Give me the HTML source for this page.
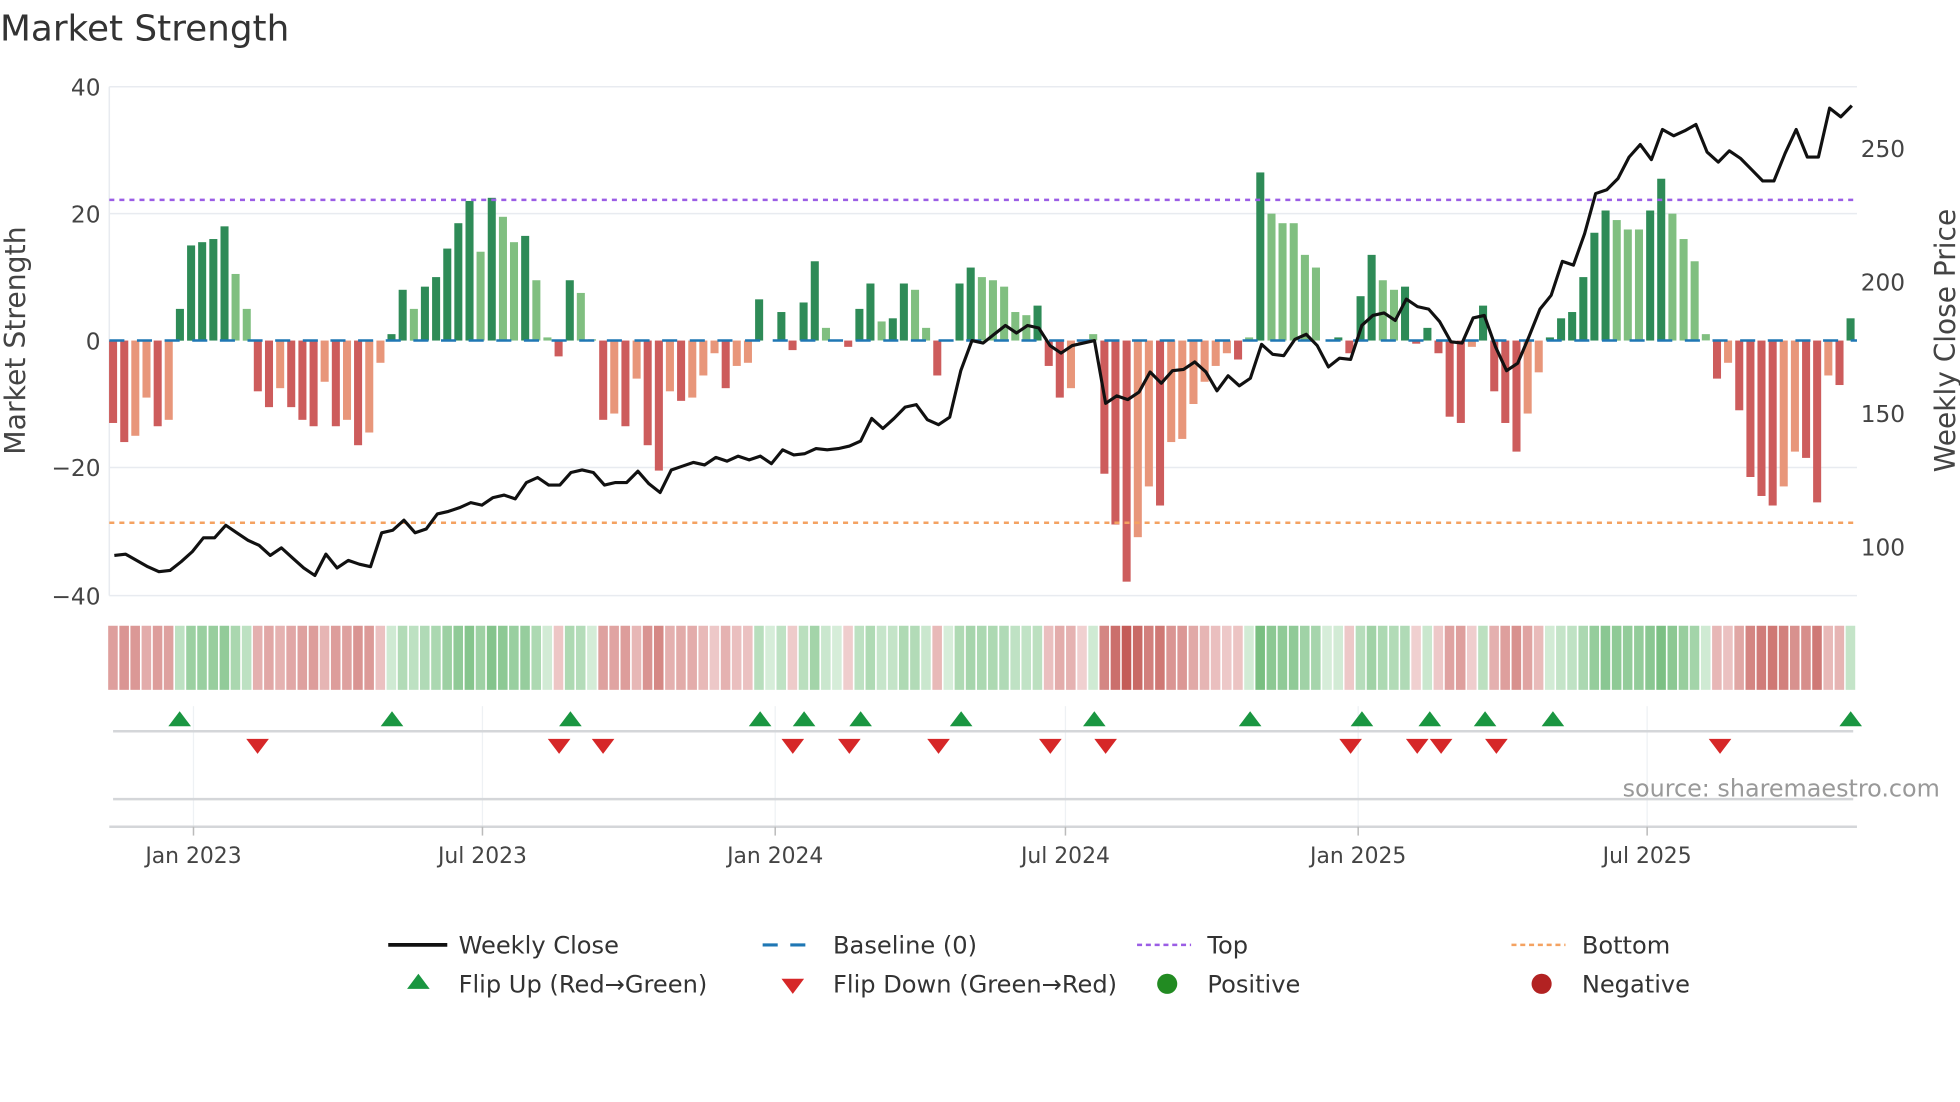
<!DOCTYPE html>
<html><head><meta charset="utf-8"><style>
html,body{margin:0;padding:0;background:#fff;}
svg{display:block;font-family:"DejaVu Sans","Liberation Sans",sans-serif;}
</style></head><body>
<svg id="s" width="1960" height="1102" viewBox="0 0 1560 877" xmlns="http://www.w3.org/2000/svg">
<rect width="1560" height="877" fill="#fff"/>
<text x="0" y="32" font-size="28.5" fill="#333">Market Strength</text>
<g stroke="#e8ebf0" stroke-width="1.2">
<line x1="87" y1="69" x2="1478" y2="69"/><line x1="87" y1="170" x2="1478" y2="170"/>
<line x1="87" y1="372" x2="1478" y2="372"/><line x1="87" y1="474" x2="1478" y2="474"/>
<line x1="87" y1="69" x2="87" y2="474"/>
</g>
<g stroke="#eef1f4" stroke-width="1">
<line x1="154" y1="562" x2="154" y2="658"/><line x1="384" y1="562" x2="384" y2="658"/>
<line x1="617" y1="562" x2="617" y2="658"/><line x1="848" y1="562" x2="848" y2="658"/>
<line x1="1081" y1="562" x2="1081" y2="658"/><line x1="1311" y1="562" x2="1311" y2="658"/>
</g>
<g font-size="18.5" fill="#444" text-anchor="end">
<text x="80" y="76">40</text><text x="80" y="177">20</text><text x="80" y="278">0</text>
<text x="80" y="379">−20</text><text x="80" y="481">−40</text>
</g>
<g font-size="18.5" fill="#444">
<text x="1481" y="125">250</text><text x="1481" y="231">200</text><text x="1481" y="336">150</text><text x="1481" y="442">100</text>
</g>
<text transform="translate(20,271) rotate(-90)" font-size="22.5" fill="#444" text-anchor="middle">Market Strength</text>
<text transform="translate(1556,271) rotate(-90)" font-size="22.3" fill="#444" text-anchor="middle">Weekly Close Price</text>
<g id="bars"></g>
<line x1="87" y1="271" x2="1478" y2="271" stroke="#1f77b4" stroke-width="2" stroke-dasharray="12,10"/>
<line x1="87" y1="159" x2="1478" y2="159" stroke="#9b5de5" stroke-width="2" stroke-dasharray="4,4"/>
<line x1="87" y1="416" x2="1478" y2="416" stroke="#f4a261" stroke-width="2" stroke-dasharray="4,4"/>
<polyline id="price" fill="none" stroke="#111" stroke-width="2.5" stroke-linejoin="round"/>
<g id="heat"></g>
<line x1="90" y1="582" x2="1475" y2="582" stroke="#d4d6d9" stroke-width="2"/>
<line x1="90" y1="636" x2="1475" y2="636" stroke="#d4d6d9" stroke-width="2"/>
<line x1="87" y1="658" x2="1478" y2="658" stroke="#d4d6d9" stroke-width="2"/>
<g id="marks"></g>
<g stroke="#bbb" stroke-width="1.2">
<line x1="154" y1="658" x2="154" y2="665"/><line x1="384" y1="658" x2="384" y2="665"/>
<line x1="617" y1="658" x2="617" y2="665"/><line x1="848" y1="658" x2="848" y2="665"/>
<line x1="1081" y1="658" x2="1081" y2="665"/><line x1="1311" y1="658" x2="1311" y2="665"/>
</g>
<g font-size="17.4" fill="#444" text-anchor="middle">
<text x="154" y="687">Jan 2023</text><text x="384" y="687">Jul 2023</text><text x="617" y="687">Jan 2024</text>
<text x="848" y="687">Jul 2024</text><text x="1081" y="687">Jan 2025</text><text x="1311" y="687">Jul 2025</text>
</g>
<text x="1544" y="634" font-size="19" fill="#999" text-anchor="end">source: sharemaestro.com</text>
<g font-size="19.2" fill="#333">
<line x1="309" y1="752" x2="356" y2="752" stroke="#111" stroke-width="3"/>
<text x="365" y="759">Weekly Close</text>
<line x1="607" y1="752" x2="651" y2="752" stroke="#1f77b4" stroke-width="2.5" stroke-dasharray="12,10"/>
<text x="663" y="759">Baseline (0)</text>
<line x1="905" y1="752" x2="948" y2="752" stroke="#9b5de5" stroke-width="2" stroke-dasharray="4,3"/>
<text x="961" y="759">Top</text>
<line x1="1203" y1="752" x2="1246" y2="752" stroke="#f4a261" stroke-width="2" stroke-dasharray="4,3"/>
<text x="1259" y="759">Bottom</text>
<polygon points="333,775 324,787 342,787" fill="#1a9641"/>
<text x="365" y="790">Flip Up (Red→Green)</text>
<polygon points="622,779 640,779 631,791" fill="#d62728"/>
<text x="663" y="790">Flip Down (Green→Red)</text>
<circle cx="929" cy="783" r="8" fill="#228b22"/>
<text x="961" y="790">Positive</text>
<circle cx="1227" cy="783" r="8" fill="#b22222"/>
<text x="1259" y="790">Negative</text>
</g>
</svg>
<script>
var V=[-13,-16,-15,-9,-13.5,-12.5,5,15,15.5,16,18,10.5,5,-8,-10.5,-7.5,-10.5,-12.5,-13.5,-6.5,-13.5,-12.5,-16.5,-14.5,-3.5,1,8,5,8.5,10,14.5,18.5,22,14,22.5,19.5,15.5,16.5,9.5,0.5,-2.5,9.5,7.5,0.2,-12.5,-11.5,-13.5,-6,-16.5,-20.5,-8,-9.5,-9,-5.5,-2,-7.5,-4,-3.5,6.5,0,4.5,-1.5,6,12.5,2,0,-1,5,9,3,3.5,9,8,2,-5.5,0,9,11.5,10,9.5,8.5,4.5,4,5.5,-4,-9,-7.5,-0.5,1,-21,-29,-38,-31,-23,-26,-16,-15.5,-10,-6.5,-4,-2,-3,0.5,26.5,20,18.5,18.5,13.5,11.5,0,0.5,-2,7,13.5,9.5,8,8.5,-0.5,2,-2,-12,-13,-1,5.5,-8,-13,-17.5,-11.5,-5,0.5,3.5,4.5,10,17,20.5,19,17.5,17.5,20.5,25.5,20,16,12.5,1,-6,-3.5,-11,-21.5,-24.5,-26,-23,-17.5,-18.5,-25.5,-5.5,-7];
V.push(3.5);
var lightIdx={2:1,3:1,5:1,11:1,12:1,15:1,19:1,21:1,23:1,24:1,27:1,33:1,35:1,36:1,38:1,39:1,42:1,43:1,45:1,47:1,50:1,52:1,53:1,54:1,56:1,57:1,64:1,69:1,72:1,73:1,78:1,79:1,80:1,81:1,82:1,86:1,87:1,88:1,92:1,93:1,95:1,96:1,97:1,98:1,99:1,100:1,102:1,104:1,105:1,106:1,107:1,108:1,114:1,115:1,122:1,127:1,128:1,135:1,136:1,137:1,140:1,141:1,142:1,143:1,145:1,150:1,151:1,154:1};
var S=8.865,bars="",heat="";
for(var i=0;i<V.length;i++){var v=V[i],x=90+i*S,h=Math.abs(v)*5.05,y=v>=0?271-h:271;
var c=v>=0?(lightIdx[i]?"#80bf80":"#2e8b57"):(lightIdx[i]?"#e8967a":"#cd5c5c");
if(h>0.3)bars+='<rect x="'+(x-3.2).toFixed(1)+'" y="'+y.toFixed(1)+'" width="6.4" height="'+h.toFixed(1)+'" fill="'+c+'"/>';
var t=Math.pow(Math.min(1,Math.abs(v)/36),0.8),lo,hi;
if(v>=0){lo=[214,237,217];hi=[95,178,105];}else{lo=[242,212,212];hi=[196,92,88];}
var col="rgb("+[0,1,2].map(function(k){return Math.round(lo[k]+(hi[k]-lo[k])*t)}).join(",")+")";
heat+='<rect x="'+(x-4.4+0.5).toFixed(1)+'" y="498" width="7.6" height="51" fill="'+col+'"/>';}
document.getElementById("bars").innerHTML=bars;document.getElementById("heat").innerHTML=heat;
var P=[442,441,446,451,455,454,447,439,428,428,418,424,430,434,442,436,444,452,458,441,452,446,449,451,424,422,414,424,421,409,407,404,400,402,396,394,397,384,380,386,386,376,374,376,386,384,384,375,385,392,374,371,368,370,364,367,363,366,363,369,358,362,361,357,358,357,355,351,333,341,333,324,322,334,338,332,295,271,273,266,259,265,259,261,275,281,275,273,271,321,315,318,312,296,305,295,294,288,296,311,299,307,301,274,282,283,270,266,275,292,285,286,259,251,249,255,238,244,246,256,272,273,253,251,276,295,289,268,246,235,208,211,186,154,151,142,125,115,127,103,108,104,99,121,129,120,126,135,144,144,122,103,125,125,86,93,84];
document.getElementById("price").setAttribute("points",P.map(function(y,i){return (91+i*S).toFixed(1)+","+y}).join(" "));
var up=[143,312,454,605,640,685,765,871,995,1084,1138,1182,1236,1473],dn=[205,445,480,631,676,747,836,880,1075,1128,1147,1191,1369],m="";
up.forEach(function(x){m+='<polygon points="'+x+',566 '+(x-9)+',578 '+(x+9)+',578" fill="#1a9641"/>';});
dn.forEach(function(x){m+='<polygon points="'+(x-9)+',588 '+(x+9)+',588 '+x+',600" fill="#d62728"/>';});
document.getElementById("marks").innerHTML=m;
</script>
</body></html>
